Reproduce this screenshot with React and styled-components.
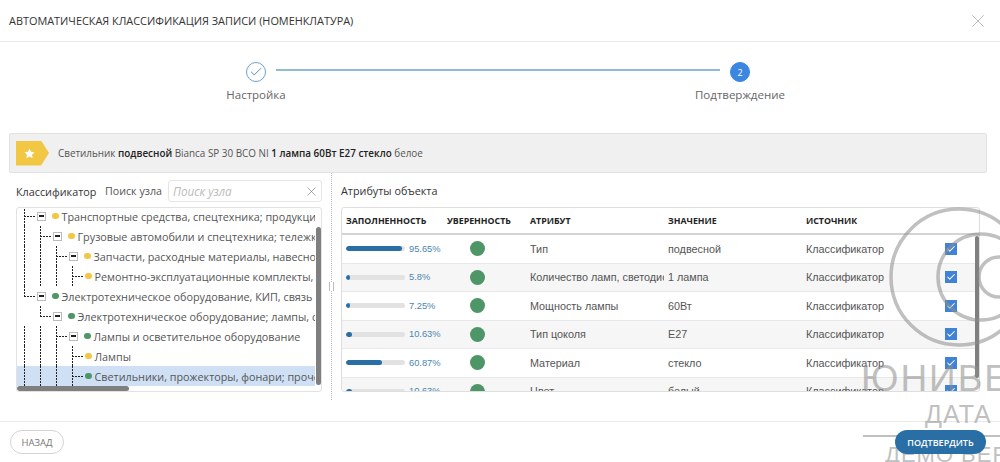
import React from "react";
import styled, { createGlobalStyle } from "styled-components";
import { X, Check } from "lucide-react";

const YELLOW = "#f2c744";
const GREEN = "#4e9568";

const treeRows = [
  { level: 0, dot: YELLOW, text: "Транспортные средства, спецтехника; продукция", toggle: true, guides: [0] },
  { level: 1, dot: YELLOW, text: "Грузовые автомобили и спецтехника; тележки", toggle: true, guides: [0, 1] },
  { level: 2, dot: YELLOW, text: "Запчасти, расходные материалы, навесное", toggle: true, guides: [0, 1, 2] },
  { level: 3, dot: YELLOW, text: "Ремонтно-эксплуатационные комплекты, наборы", guides: [0, 1, 2, 3] },
  { level: 0, dot: GREEN, text: "Электротехническое оборудование, КИП, связь", toggle: true, guides: [], last: true },
  { level: 1, dot: GREEN, text: "Электротехническое оборудование; лампы, светильники", toggle: true, guides: [], last: true },
  { level: 2, dot: GREEN, text: "Лампы и осветительное оборудование", toggle: true, guides: [0, 1, 2] },
  { level: 3, dot: YELLOW, text: "Лампы", guides: [0, 1, 2, 3] },
  { level: 3, dot: GREEN, text: "Светильники, прожекторы, фонари; прочее", guides: [0, 1, 2, 3], selected: true },
];

const attrRows = [
  [95.65, "Тип", "подвесной"],
  [5.8, "Количество ламп, светодиодов", "1 лампа"],
  [7.25, "Мощность лампы", "60Вт"],
  [10.63, "Тип цоколя", "E27"],
  [60.87, "Материал", "стекло"],
  [10.63, "Цвет", "белый"],
];

export default function App() {
  return (
    <>
      <GlobalStyle />
      <Modal>
        <Header>
          <Title>Автоматическая классификация записи (номенклатура)</Title>
          <CloseIcon size={22} strokeWidth={0.7} />
        </Header>
        <Stepper>
          <Step>
            <StepCircle>
              <Check size={14} strokeWidth={1.5} />
            </StepCircle>
            <StepLabel>Настройка</StepLabel>
          </Step>
          <StepLine />
          <Step>
            <StepCircle $active>2</StepCircle>
            <StepLabel>Подтверждение</StepLabel>
          </Step>
        </Stepper>
        <Banner>
          <Flag>
            <svg width="11" height="11" viewBox="0 0 24 24">
              <path fill="#fff" d="M12 1.500l3.300 6.900 7.600 1-5.500 5.300 1.400 7.500-6.800-3.700-6.800 3.700 1.400-7.500L1.100 9.400l7.600-1z" />
            </svg>
          </Flag>
          <BannerText>
            Светильник <b>подвесной</b> Bianca SP 30 BCO NI <b>1 лампа 60Вт E27 стекло</b> белое
          </BannerText>
        </Banner>
        <Panels>
          <LeftPanel>
            <PanelHead>
              <PanelTitle>Классификатор</PanelTitle>
              <SearchLabel>Поиск узла</SearchLabel>
              <SearchBox>
                <SearchPlaceholder>Поиск узла</SearchPlaceholder>
                <X size={15} strokeWidth={1} color="#777" />
              </SearchBox>
            </PanelHead>
            <TreeBox>
              <TreeScroll>
                {treeRows.map((row) => (
                  <TreeRow key={row.text} $selected={row.selected}>
                    {row.guides.map((g) => (
                      <Guide key={g} $at={g} />
                    ))}
                    {row.last && <Guide $at={row.level} $half />}
                    <Elbow $level={row.level} />
                    <TreeContent $level={row.level}>
                      {row.toggle && <Toggle />}
                      <Dot $color={row.dot} />
                      <TreeText>{row.text}</TreeText>
                    </TreeContent>
                  </TreeRow>
                ))}
              </TreeScroll>
              <TreeVThumb />
              <TreeHThumb />
            </TreeBox>
          </LeftPanel>
          <Divider>
            <Grip />
          </Divider>
          <RightPanel>
            <RightTitle>Атрибуты объекта</RightTitle>
            <TableBox>
              <TableHead>
                <HeadCell>Заполненность</HeadCell>
                <HeadCell>Уверенность</HeadCell>
                <HeadCell>Атрибут</HeadCell>
                <HeadCell>Значение</HeadCell>
                <HeadCell>Источник</HeadCell>
                <span />
              </TableHead>
              {attrRows.map(([fill, attr, value], i) => (
                <TableRow key={attr} $odd={i % 2 === 1}>
                  <FillCell>
                    <Track>
                      <Bar style={{ width: `${Math.max(fill, 6.5)}%` }} />
                    </Track>
                    <Pct>{fill}%</Pct>
                  </FillCell>
                  <CenterCell>
                    <Confidence />
                  </CenterCell>
                  <Cell>{attr}</Cell>
                  <Cell>{value}</Cell>
                  <Cell>Классификатор</Cell>
                  <CheckCell>
                    <CheckBox>
                      <Check size={10} strokeWidth={2.5} color="#fff" />
                    </CheckBox>
                  </CheckCell>
                </TableRow>
              ))}
              <TableThumb />
            </TableBox>
          </RightPanel>
        </Panels>
        <Footer>
          <BackButton>Назад</BackButton>
          <ConfirmButton>Подтвердить</ConfirmButton>
        </Footer>
        <Watermark>
          <svg width="137" height="142" viewBox="0 0 137 142">
            <circle cx="96" cy="72" r="68" fill="none" stroke="#8d8d8d" strokeWidth="3.5" />
            <circle cx="118" cy="72" r="43" fill="none" stroke="#8d8d8d" strokeWidth="3.5" />
            <circle cx="136" cy="72" r="20" fill="none" stroke="#8d8d8d" strokeWidth="3.5" />
          </svg>
          <MarkBig>ЮНИВЕРС</MarkBig>
          <MarkMid>ДАТА</MarkMid>
          <MarkRule />
          <MarkSmall>ДЕМО ВЕРСИЯ</MarkSmall>
        </Watermark>
      </Modal>
    </>
  );
}

const GlobalStyle = createGlobalStyle`
  html, body {
    margin: 0;
    padding: 0;
    background: #fff;
  }
  body {
    font-family: "Open Sans", sans-serif;
    color: #444;
    overflow: hidden;
  }
`;

const Modal = styled.div`
  position: relative;
  width: 1000px;
  height: 462px;
  overflow: hidden;
  display: flex;
  flex-direction: column;
  background: #fff;
`;

const Header = styled.div`
  height: 41px;
  flex: none;
  display: flex;
  align-items: center;
  justify-content: space-between;
  padding: 0 11px 0 9px;
  border-bottom: 1px solid #e9e9e9;
`;

const Title = styled.div`
  font-size: 10.9px;
  text-transform: uppercase;
  color: #333;
`;

const CloseIcon = styled(X)`
  color: #999;
`;

const Stepper = styled.div`
  height: 89px;
  flex: none;
  display: flex;
  align-items: flex-start;
  justify-content: center;
  padding: 20px 4px 0 0;
  box-sizing: border-box;
`;

const Step = styled.div`
  width: 100px;
  display: flex;
  flex-direction: column;
  align-items: center;
  gap: 5px;
`;

const StepCircle = styled.div`
  width: 20px;
  height: 20px;
  border-radius: 50%;
  box-sizing: border-box;
  display: flex;
  align-items: center;
  justify-content: center;
  font-size: 9px;
  color: ${(p) => (p.$active ? "#fff" : "#3f7fb5")};
  background: ${(p) => (p.$active ? "#3b86e0" : "#fff")};
  border: 1px solid ${(p) => (p.$active ? "#3b86e0" : "#6ea3cd")};
`;

const StepLabel = styled.div`
  font-size: 11.5px;
  color: #666;
  white-space: nowrap;
`;

const StepLine = styled.div`
  width: 444px;
  height: 2px;
  margin: 7px -30px 0 -30px;
  background: #8fbcd0;
`;

const Banner = styled.div`
  height: 40px;
  flex: none;
  margin: 2px 13px 0 9px;
  padding-left: 6px;
  box-sizing: border-box;
  display: flex;
  align-items: center;
  gap: 9px;
  background: #f0f0f0;
  border: 1px solid #e2e2e2;
  border-radius: 2px;
`;

const Flag = styled.div`
  width: 33px;
  height: 25px;
  display: flex;
  align-items: center;
  justify-content: center;
  padding-right: 7px;
  box-sizing: border-box;
  background: #f2c744;
  clip-path: polygon(0 0, 76% 0, 100% 50%, 76% 100%, 0 100%);
`;

const BannerText = styled.div`
  font-size: 9.9px;
  color: #555;
  b {
    font-weight: 600;
    color: #222;
  }
`;

const Panels = styled.div`
  flex: 1;
  display: flex;
  min-height: 0;
`;

const LeftPanel = styled.div`
  width: 322px;
  flex: none;
  box-sizing: border-box;
  padding: 7px 0 0 16px;
`;

const PanelHead = styled.div`
  height: 22px;
  display: flex;
  align-items: center;
  margin-bottom: 5px;
`;

const PanelTitle = styled.div`
  font-size: 10.8px;
  color: #333;
  width: 89px;
`;

const SearchLabel = styled.div`
  font-size: 10.7px;
  color: #555;
  width: 63px;
`;

const SearchBox = styled.div`
  flex: 1;
  height: 22px;
  box-sizing: border-box;
  display: flex;
  align-items: center;
  justify-content: space-between;
  padding: 0 2px 0 4px;
  border: 1px solid #e6e6e6;
  border-radius: 3px;
`;

const SearchPlaceholder = styled.span`
  font-size: 11.7px;
  font-style: italic;
  color: #bbb;
`;

const TreeBox = styled.div`
  position: relative;
  height: 185px;
  box-sizing: border-box;
  border: 1px solid #e2e2e2;
  border-radius: 3px;
  overflow: hidden;
`;

const TreeScroll = styled.div`
  height: 100%;
  margin-top: -2px;
  padding-right: 6px;
`;

const TreeRow = styled.div`
  position: relative;
  height: 20px;
  display: flex;
  align-items: center;
  white-space: nowrap;
  overflow: hidden;
  background: ${(p) => (p.$selected ? "#cfe0f5" : "transparent")};
`;

const Guide = styled.i`
  position: absolute;
  top: 0;
  bottom: ${(p) => (p.$half ? "50%" : "0")};
  left: ${(p) => 7 + p.$at * 16}px;
  width: 1px;
  background: repeating-linear-gradient(to bottom, #222 0 2px, transparent 2px 3px);
`;

const Elbow = styled.i`
  position: absolute;
  top: 50%;
  left: ${(p) => 7 + p.$level * 16}px;
  width: 12px;
  height: 1px;
  background: repeating-linear-gradient(to right, #222 0 2px, transparent 2px 3px);
`;

const TreeContent = styled.div`
  display: flex;
  align-items: center;
  padding-left: ${(p) => 20 + p.$level * 16}px;
  min-width: 0;
`;

const Toggle = styled.i`
  position: relative;
  width: 9px;
  height: 9px;
  flex: none;
  margin-right: 6px;
  box-sizing: border-box;
  background: #fff;
  border: 1px solid #bbb;
  &::after {
    content: "";
    position: absolute;
    left: 1px;
    right: 1px;
    top: 2.500px;
    height: 2px;
    background: #222;
  }
`;

const Dot = styled.i`
  width: 6.500px;
  height: 6.500px;
  flex: none;
  border-radius: 50%;
  margin-right: 3px;
  background: ${(p) => p.$color};
`;

const TreeText = styled.span`
  font-size: 10.8px;
  color: #555;
`;

const TreeVThumb = styled.div`
  position: absolute;
  right: 0;
  top: 19px;
  width: 5px;
  height: 158px;
  border-radius: 3px;
  background: #7f7f7f;
`;

const TreeHThumb = styled.div`
  position: absolute;
  left: 0;
  bottom: 0;
  width: 112px;
  height: 5px;
  border-radius: 3px;
  background: #7f7f7f;
`;

const Divider = styled.div`
  width: 18px;
  flex: none;
  margin-bottom: 21px;
  display: flex;
  align-items: center;
  justify-content: center;
  position: relative;
  &::before {
    content: "";
    position: absolute;
    top: 0;
    bottom: 0;
    left: 9px;
    border-left: 1px dotted #bbb;
  }
`;

const Grip = styled.i`
  position: relative;
  width: 3px;
  height: 9px;
  background: #fff;
  border-left: 1px solid #bbb;
  border-right: 1px solid #bbb;
`;

const RightPanel = styled.div`
  width: 639px;
  flex: none;
  padding-top: 7px;
  margin-left: 1px;
`;

const RightTitle = styled.div`
  height: 22px;
  line-height: 22px;
  margin-bottom: 5px;
  font-size: 10.8px;
  color: #333;
`;

const TableBox = styled.div`
  position: relative;
  height: 185px;
  box-sizing: border-box;
  border: 1px solid #dedede;
  border-radius: 3px;
  overflow: hidden;
`;

const columns = "101px 83px 138px 138px 130px 1fr";

const TableHead = styled.div`
  height: 25px;
  display: grid;
  grid-template-columns: ${columns};
  align-items: center;
  padding-left: 4px;
  border-bottom: 2px solid #d4d4d4;
`;

const HeadCell = styled.div`
  font-size: 8.8px;
  font-weight: 700;
  text-transform: uppercase;
  color: #222;
  white-space: nowrap;
`;

const TableRow = styled.div`
  height: 28.5px;
  box-sizing: border-box;
  display: grid;
  grid-template-columns: ${columns};
  align-items: center;
  padding-left: 4px;
  border-bottom: 1px solid #e8e8e8;
  background: ${(p) => (p.$odd ? "#f6f6f6" : "#fff")};
`;

const FillCell = styled.div`
  display: flex;
  align-items: center;
  gap: 4px;
`;

const Track = styled.div`
  width: 59px;
  height: 5px;
  border-radius: 3px;
  background: #e2e2e2;
  overflow: hidden;
`;

const Bar = styled.div`
  height: 100%;
  border-radius: 3px;
  background: #2a6ea6;
`;

const Pct = styled.span`
  font-family: "Liberation Sans", sans-serif;
  font-size: 9.3px;
  color: #4a86b0;
`;

const CenterCell = styled.div`
  display: flex;
  padding-left: 23px;
`;

const Confidence = styled.i`
  width: 15px;
  height: 15px;
  border-radius: 50%;
  background: #4e9568;
`;

const Cell = styled.div`
  font-family: "Liberation Sans", sans-serif;
  font-size: 10.8px;
  color: #555;
  white-space: nowrap;
  overflow: hidden;
  margin-right: 4px;
`;

const CheckCell = styled.div`
  display: flex;
  padding-left: 9px;
`;

const CheckBox = styled.i`
  width: 12px;
  height: 12px;
  display: flex;
  align-items: center;
  justify-content: center;
  background: #3f82d8;
`;

const TableThumb = styled.div`
  position: absolute;
  right: 0;
  top: 28px;
  width: 4px;
  height: 142px;
  border-radius: 2px;
  background: #7f7f7f;
`;

const Footer = styled.div`
  height: 40px;
  flex: none;
  display: flex;
  align-items: center;
  justify-content: space-between;
  padding: 0 14px 0 10px;
  border-top: 1px solid #e9e9e9;
`;

const BackButton = styled.button`
  width: 54px;
  height: 24px;
  padding: 0;
  font-family: "Open Sans", sans-serif;
  font-size: 9.5px;
  text-transform: uppercase;
  color: #777;
  background: #fff;
  border: 1px solid #d4d4d4;
  border-radius: 12px;
`;

const ConfirmButton = styled.button`
  position: relative;
  z-index: 2;
  width: 91px;
  height: 24px;
  padding: 0;
  font-family: "Open Sans", sans-serif;
  font-size: 9px;
  font-weight: 600;
  text-transform: uppercase;
  color: #fff;
  background: #2a6ea6;
  border: none;
  border-radius: 12px;
`;

const Watermark = styled.div`
  position: absolute;
  left: 863px;
  top: 205px;
  width: 137px;
  display: flex;
  flex-direction: column;
  opacity: 0.55;
  pointer-events: none;
  white-space: nowrap;
  color: #8d8d8d;
  font-family: "Liberation Sans", sans-serif;
  svg {
    flex: none;
  }
`;

const MarkBig = styled.div`
  font-size: 37px;
  line-height: 37px;
  letter-spacing: 2px;
  margin: 13px 0 0 -2px;
`;

const MarkMid = styled.div`
  font-size: 25px;
  line-height: 26px;
  letter-spacing: 1px;
  margin: 4px 0 0 62px;
`;

const MarkRule = styled.div`
  height: 2px;
  flex: none;
  margin-top: 8px;
  background: #8d8d8d;
`;

const MarkSmall = styled.div`
  font-size: 22px;
  line-height: 22px;
  letter-spacing: 1px;
  margin: 7px 0 0 22px;
`;
